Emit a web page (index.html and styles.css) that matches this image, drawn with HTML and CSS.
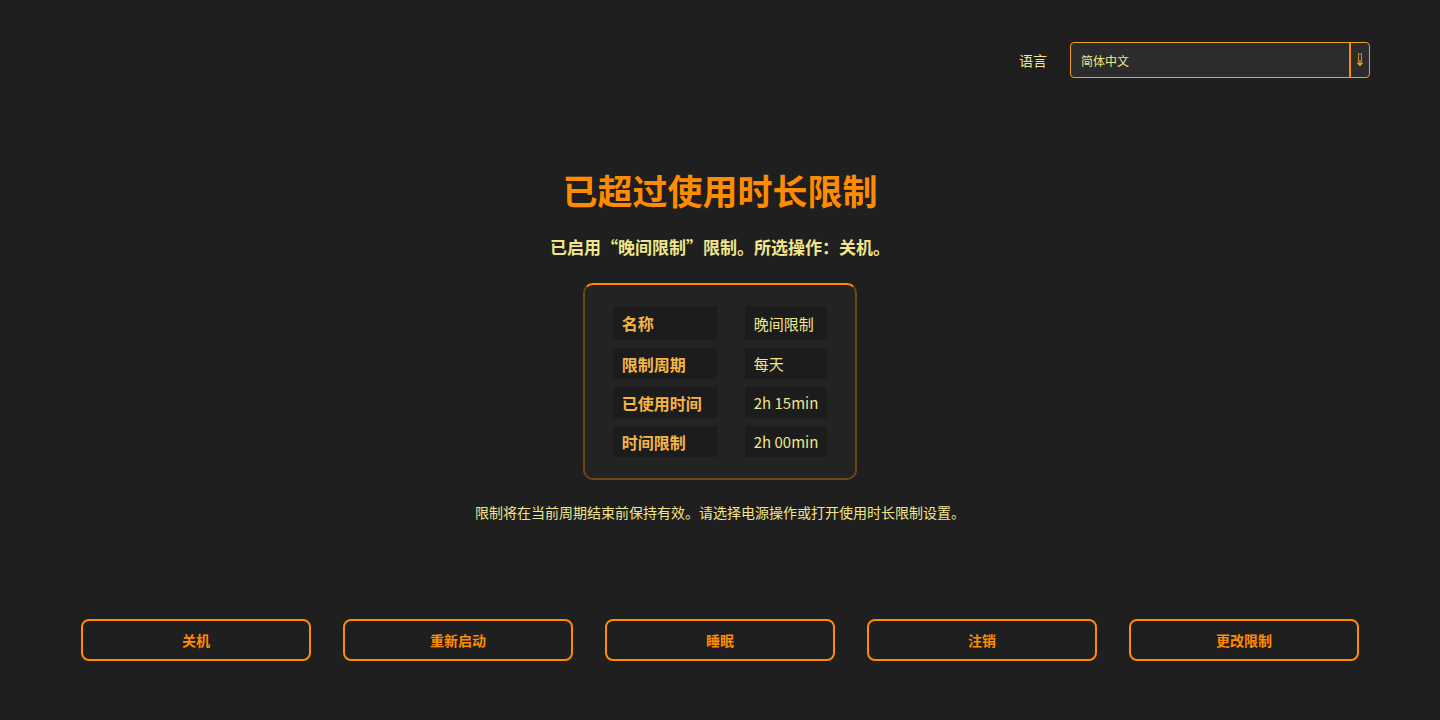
FILE: index.html
```html
<!DOCTYPE html>
<html>
<head>
    <meta charset="utf-8">
    <link rel="stylesheet" href="styles.css">
</head>
<body>
    <div class="topbar">
        <span class="lang-label">语言</span>
        <div class="select">
            <span class="select-text">简体中文</span>
            <span class="select-arrow">
                <svg width="8" height="14" viewBox="0 0 8 14">
                    <rect x="2.5" y="1" width="3" height="7" fill="none" stroke="#c8901a" stroke-width="1"/>
                    <path d="M4 8 V12 M1.5 9.5 L4 12.5 L6.5 9.5" fill="none" stroke="#d9a21c" stroke-width="1.4"/>
                </svg>
            </span>
        </div>
    </div>

    <div class="main">
        <h1 class="title">已超过使用时长限制</h1>
        <p class="subtitle">已启用“晚间限制”限制。所选操作：关机。</p>

        <div class="card">
            <table class="info">
                <tr>
                    <td class="key">名称</td>
                    <td class="val">晚间限制</td>
                </tr>
                <tr>
                    <td class="key">限制周期</td>
                    <td class="val">每天</td>
                </tr>
                <tr>
                    <td class="key">已使用时间</td>
                    <td class="val">2h 15min</td>
                </tr>
                <tr>
                    <td class="key">时间限制</td>
                    <td class="val">2h 00min</td>
                </tr>
            </table>
        </div>

        <p class="note">限制将在当前周期结束前保持有效。请选择电源操作或打开使用时长限制设置。</p>
    </div>

    <div class="actions">
        <button class="btn">关机</button>
        <button class="btn">重新启动</button>
        <button class="btn">睡眠</button>
        <button class="btn">注销</button>
        <button class="btn">更改限制</button>
    </div>
</body>
</html>
```

FILE: styles.css
```css
html, body {
    margin: 0;
    padding: 0;
}
body {
    background-color: #1f1f1f;
    font-family: "Noto Sans CJK SC", "Noto Sans", sans-serif;
    color: #f0e68c;
    height: 720px;
    overflow: hidden;
}
.topbar {
    display: flex;
    justify-content: flex-end;
    align-items: center;
    gap: 23px;
    padding: 42px 70px 0 0;
}
.lang-label {
    font-size: 14px;
    color: #f0e68c;
}
.select {
    width: 298px;
    height: 34px;
    display: flex;
    align-items: center;
    background-color: #2c2c2c;
    border: 1px solid #f0a030;
    border-radius: 4px;
}
.select-text {
    flex: 1;
    padding-left: 10px;
    font-size: 12px;
    color: #f0e68c;
}
.select-arrow {
    width: 18px;
    height: 100%;
    border-left: 2px solid #ff8c00;
    display: flex;
    align-items: center;
    justify-content: center;
}
.select-arrow svg {
    display: block;
}
.main {
    display: flex;
    flex-direction: column;
    align-items: center;
}
.title {
    margin: 88px 0 0 0;
    font-size: 35px;
    line-height: 48px;
    font-weight: bold;
    color: #ff8c00;
}
.subtitle {
    margin: 20px 0 0 0;
    font-size: 17px;
    line-height: 26px;
    font-weight: bold;
    color: #f0e68c;
}
.card {
    margin-top: 23px;
    background-color: #232323;
    border: 2px solid #6e4515;
    border-top-color: #ff8c00;
    border-radius: 10px;
    padding: 21px 28px 21px 28px;
}
.info {
    border-spacing: 28px 8px;
    margin: -8px -28px;
}
.info td {
    background-color: #1c1c1c;
    padding: 0 9px;
    height: 31px;
    white-space: nowrap;
}
.info tr:first-child td {
    height: 34px;
}
.key {
    width: 86px;
    font-size: 16px;
    font-weight: bold;
    color: #f5b544;
}
.val {
    font-size: 15px;
    color: #f0e68c;
    padding-right: 8px;
}
.note {
    margin: 22px 0 0 0;
    font-size: 14px;
    color: #f0e68c;
}
.actions {
    display: flex;
    gap: 32px;
    padding: 0 81px;
    margin-top: 97px;
}
.btn {
    flex: 1;
    height: 42px;
    background-color: transparent;
    border: 2px solid #ff8c00;
    border-radius: 8px;
    color: #ff8c00;
    font-family: "Noto Sans CJK SC", "Noto Sans", sans-serif;
    font-size: 14px;
    font-weight: bold;
    cursor: pointer;
}
.btn:hover {
    background-color: #2a2a2a;
}
```
